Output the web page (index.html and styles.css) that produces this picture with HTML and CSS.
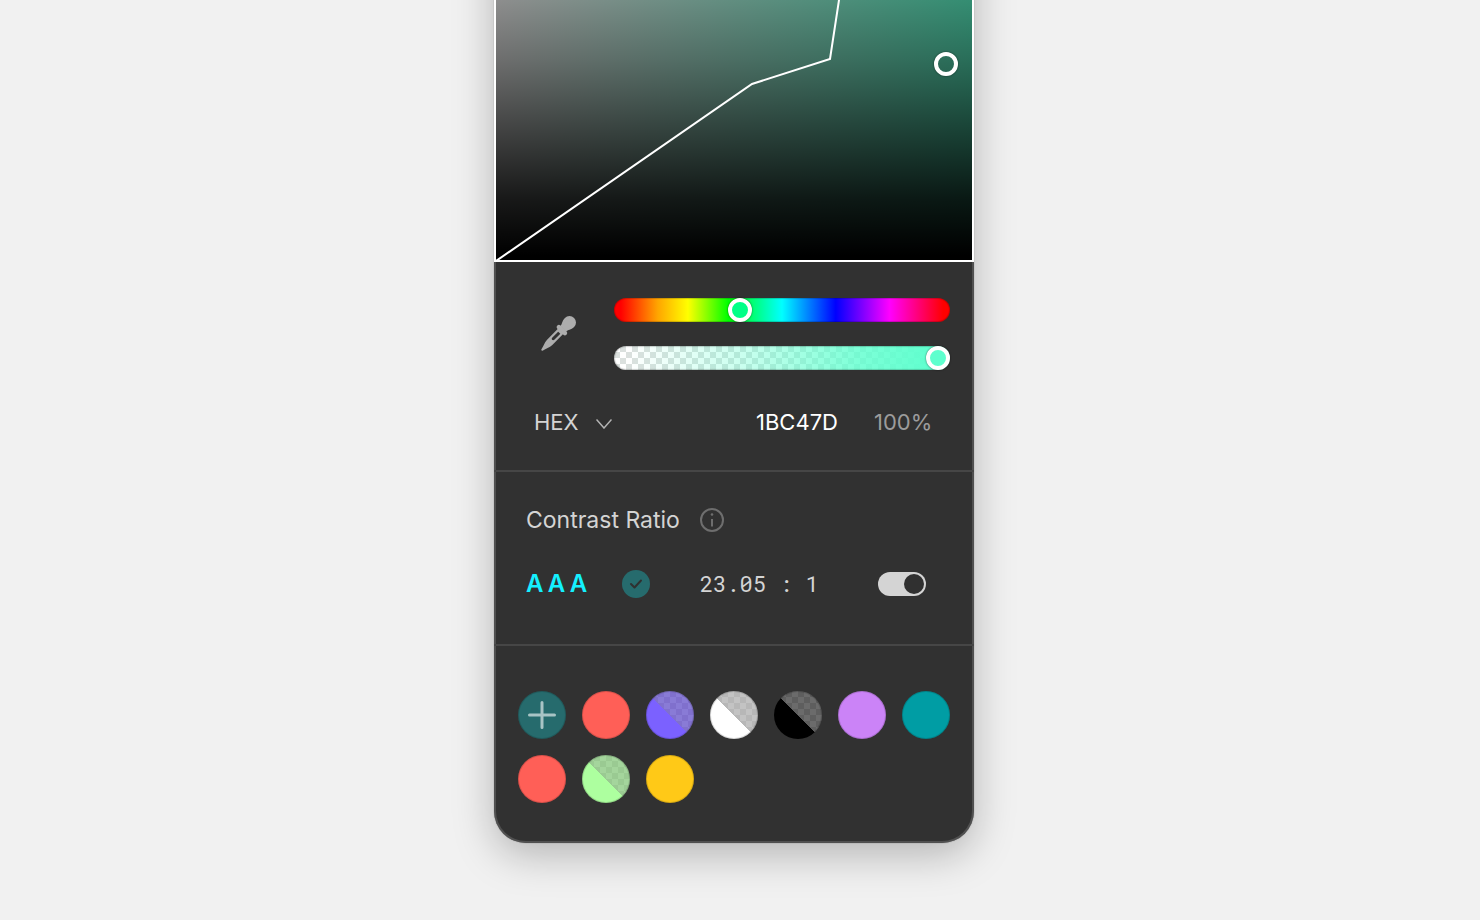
FILE: index.html
```html
<!DOCTYPE html>
<html lang="en">
<head>
    <meta charset="UTF-8">
    <meta name="viewport" content="width=device-width, initial-scale=1.0">
    <title>Color Picker</title>
    <link rel="stylesheet" href="styles.css">
</head>
<body>

    <main class="picker">
        <!-- Saturation / brightness area -->
        <div class="canvas">
            <svg class="contrast-line" viewBox="0 0 476 478" preserveAspectRatio="none" aria-hidden="true">
                <path d="M0 479 L256 302 L334 277 L343 218 L353 150 L380 70 L476 0" />
            </svg>
            <button class="canvas-handle" type="button" aria-label="Selected color"></button>
        </div>

        <!-- Sliders and color value -->
        <section class="section controls">
            <div class="sliders-row">
                <button class="eyedropper" type="button" aria-label="Pick color from screen">
                    <svg width="36" height="36" viewBox="0 0 36 36" aria-hidden="true">
                        <g transform="translate(29.5 6.5) rotate(45)">
                            <path d="M-6.500 0 A6.500 6.500 0 0 1 6.500 0 C6.500 4.500 4 6 4 9 H-4 C-4 6 -6.500 4.500 -6.500 0 Z" />
                            <rect x="-6.500" y="8.500" width="13" height="4.500" rx="2.200" />
                            <path fill-rule="evenodd" d="M-3.700 12 H3.700 V28 C3.700 32 1.500 35 1 38.500 C0.800 39.800 -0.800 39.800 -1 38.500 C-1.500 35 -3.700 32 -3.700 28 Z M-1.500 14.500 V23 C-1.500 25 1.500 25 1.500 23 V14.500 Z" />
                        </g>
                    </svg>
                </button>
                <div class="sliders">
                    <input class="slider hue" type="range" min="0" max="360" value="132" aria-label="Hue">
                    <input class="slider alpha" type="range" min="0" max="100" value="100" aria-label="Opacity">
                </div>
            </div>
            <div class="value-row">
                <div class="format">
                    <select class="format-select" aria-label="Color format">
                        <option>HEX</option>
                        <option>RGB</option>
                        <option>HSL</option>
                    </select>
                    <svg class="chevron" width="16" height="10" viewBox="0 0 16 10" aria-hidden="true">
                        <path d="M0.500 0.500 L8 9 L15.500 0.500" />
                    </svg>
                </div>
                <input class="hex-value" type="text" value="1BC47D" aria-label="Hex value">
                <input class="alpha-value" type="text" value="100%" aria-label="Opacity value">
            </div>
        </section>

        <!-- Contrast ratio -->
        <section class="section contrast">
            <div class="contrast-title">
                <h2>Contrast Ratio</h2>
                <button class="info" type="button" aria-label="About contrast ratio">
                    <svg width="24" height="24" viewBox="0 0 24 24" aria-hidden="true">
                        <circle class="ring" cx="12" cy="12" r="11" />
                        <circle class="dot" cx="12" cy="6.500" r="1.300" />
                        <path class="stem" d="M12 11 V18.500" />
                    </svg>
                </button>
            </div>
            <div class="contrast-row">
                <span class="level">AAA</span>
                <svg class="check" width="28" height="28" viewBox="0 0 28 28" role="img" aria-label="Passed">
                    <circle cx="14" cy="14" r="14" />
                    <path d="M9 14 L12.500 17.500 L19 10.500" />
                </svg>
                <span class="ratio">23.05 : 1</span>
                <input class="toggle" type="checkbox" checked aria-label="Show contrast line">
            </div>
        </section>

        <!-- Saved colors -->
        <section class="swatches">
            <button class="swatch add" type="button" aria-label="Add color">
                <svg width="28" height="28" viewBox="0 0 28 28" aria-hidden="true">
                    <path d="M14 1.500 V26.500 M1.500 14 H26.500" />
                </svg>
            </button>
            <button class="swatch coral" type="button" aria-label="Coral"></button>
            <button class="swatch split violet" type="button" aria-label="Violet"></button>
            <button class="swatch split white" type="button" aria-label="White"></button>
            <button class="swatch split black" type="button" aria-label="Black"></button>
            <button class="swatch orchid" type="button" aria-label="Orchid"></button>
            <button class="swatch teal" type="button" aria-label="Teal"></button>
            <button class="swatch coral" type="button" aria-label="Coral"></button>
            <button class="swatch split green" type="button" aria-label="Green"></button>
            <button class="swatch yellow" type="button" aria-label="Yellow"></button>
        </section>
    </main>

</body>
</html>
```
FILE: styles.css
```css
* {
    box-sizing: border-box;
}

body {
    display: flow-root;
    min-height: 100vh;
    margin: 0;
    padding-right: 12px;
    background-color: #f1f1f1;
    font-family: Inter, sans-serif;
    font-size: 22px;
    line-height: 28px;
    color: #d4d4d4;
}

button,
input,
select {
    margin: 0;
    padding: 0;
    border: 0;
    background: none;
    color: inherit;
    font: inherit;
}

button {
    cursor: pointer;
}

svg {
    display: block;
}

.picker {
    max-width: 480px;
    margin: -218px auto 0;
    border: 2px solid #505050;
    border-top: 0;
    border-radius: 32px;
    background-color: #313131;
    box-shadow: 0 0 1px rgba(0, 0, 0, 0.5), 0 12px 40px rgba(0, 0, 0, 0.25);
}

/* Canvas */
.canvas {
    position: relative;
    height: 480px;
    margin: 0 -2px;
    border: 2px solid #fff;
    border-top: 0;
    background:
        linear-gradient(to bottom, rgba(0, 0, 0, 0) 0%, rgba(0, 0, 0, 0.44) 45%, rgba(0, 0, 0, 0.57) 58%, rgba(0, 0, 0, 0.79) 77%, rgba(0, 0, 0, 0.9) 87%, #000 99%),
        linear-gradient(to right, #fff, #5effce);
}

.contrast-line {
    width: 100%;
    height: 100%;
}

.contrast-line path {
    fill: none;
    stroke: #fff;
    stroke-width: 2;
}

.canvas-handle {
    position: absolute;
    right: 14px;
    bottom: 184px;
    width: 24px;
    height: 24px;
    border: 4px solid #fff;
    border-radius: 50%;
    box-shadow: 0 0 2px rgba(0, 0, 0, 0.6);
}

/* Sections */
.section {
    margin: 0 -2px;
    border-bottom: 2px solid #464646;
}

.controls {
    padding: 36px 24px 34px 40px;
}

.sliders-row {
    display: flex;
    align-items: center;
    gap: 32px;
}

.eyedropper {
    padding: 0 6px;
}

.eyedropper svg {
    fill: #adadad;
}

.sliders {
    flex: 1;
    display: flex;
    flex-direction: column;
    gap: 24px;
}

.slider {
    display: block;
    width: 100%;
    height: 24px;
    border-radius: 12px;
    appearance: none;
    box-shadow: inset 0 0 1px 1px rgba(0, 0, 0, 0.2);
}

.slider::-webkit-slider-thumb {
    width: 24px;
    height: 24px;
    border: 4px solid #fff;
    border-radius: 50%;
    appearance: none;
    box-shadow: 0 0 2px rgba(0, 0, 0, 0.6);
}

.hue {
    background: linear-gradient(to right, #f00 2%, #ffa500 13%, #ff0 22%, #0f0 34%, #0ff 50%, #00f 66%, #f0f 82%, #f00 98%);
}

.hue::-webkit-slider-thumb {
    background-color: #00ff87;
}

.alpha {
    background:
        linear-gradient(to right, rgba(94, 255, 206, 0) 4%, rgba(94, 255, 206, 0.33) 38%, rgba(94, 255, 206, 0.8) 72%, #5effce 96%),
        repeating-conic-gradient(#dbe0de 0 25%, #fff 0 50%) 0 0 / 12px 12px;
}

.alpha::-webkit-slider-thumb {
    background-color: #5effce;
}

/* Value row */
.value-row {
    display: flex;
    align-items: center;
    margin-top: 38px;
}

.format {
    position: relative;
    width: 80px;
    margin-right: auto;
}

.format-select {
    display: block;
    width: 100%;
    height: 28px;
    appearance: none;
}

.chevron {
    position: absolute;
    top: 11px;
    right: 2px;
    pointer-events: none;
}

.chevron path {
    fill: none;
    stroke: #b4b4b4;
    stroke-width: 1.5;
}

.hex-value {
    width: 96px;
    color: #fff;
}

.alpha-value {
    width: 64px;
    margin: 0 12px 0 22px;
    color: #9c9c9c;
}

/* Contrast section */
.contrast {
    padding: 34px 48px 46px 32px;
}

.contrast-title {
    display: flex;
    align-items: center;
    gap: 20px;
}

.contrast-title h2 {
    margin: 0;
    font-size: 23px;
    font-weight: 400;
}

.info .ring,
.info .stem {
    fill: none;
    stroke: #6e6e6e;
    stroke-width: 2;
}

.info .dot {
    fill: #6e6e6e;
}

.contrast-row {
    display: flex;
    align-items: center;
    margin-top: 36px;
}

.level {
    width: 96px;
    color: #14f0ff;
    font-size: 24px;
    font-weight: 600;
    letter-spacing: 4px;
}

.check circle {
    fill: #266b6d;
}

.check path {
    fill: none;
    stroke: #303030;
    stroke-width: 2;
    stroke-linecap: round;
    stroke-linejoin: round;
}

.ratio {
    margin-left: 50px;
    font-family: "Roboto Mono", "Liberation Mono", monospace;
}

.toggle {
    width: 48px;
    height: 24px;
    margin-left: auto;
    padding: 2px;
    border-radius: 12px;
    background-color: #d4d4d4;
    appearance: none;
}

.toggle::before {
    content: "";
    display: block;
    width: 20px;
    height: 20px;
    border-radius: 50%;
    background-color: #303030;
}

.toggle:checked::before {
    margin-left: auto;
}

/* Swatches */
.swatches {
    display: flex;
    flex-wrap: wrap;
    gap: 16px;
    padding: 45px 22px 38px;
}

.swatch {
    display: flex;
    align-items: center;
    justify-content: center;
    width: 48px;
    height: 48px;
    border-radius: 50%;
    box-shadow: inset 0 0 0 1px rgba(0, 0, 0, 0.15);
}

.add {
    background-color: #266b6d;
}

.add path {
    fill: none;
    stroke: #a8c4c5;
    stroke-width: 3;
    stroke-linecap: round;
}

.coral {
    background-color: #ff5f57;
}

.orchid {
    background-color: #cb83f7;
}

.teal {
    background-color: #009da4;
}

.yellow {
    background-color: #ffc917;
}

/* Opaque color on the lower left, translucent preview on the upper right */
.split {
    background:
        linear-gradient(45deg, var(--solid) 50%, transparent 50%),
        repeating-conic-gradient(var(--light) 0 25%, var(--dark) 0 50%) 0 0 / 12px 12px;
}

.violet {
    --solid: #7b61ff;
    --light: #897bd6;
    --dark: #8070cd;
}

.white {
    --solid: #fff;
    --light: #c3c3c3;
    --dark: #b7b7b7;
}

.black {
    --solid: #000;
    --light: #6b6b6b;
    --dark: #5e5e5e;
}

.green {
    --solid: #adff9f;
    --light: #a4d59c;
    --dark: #9aca92;
}
```
